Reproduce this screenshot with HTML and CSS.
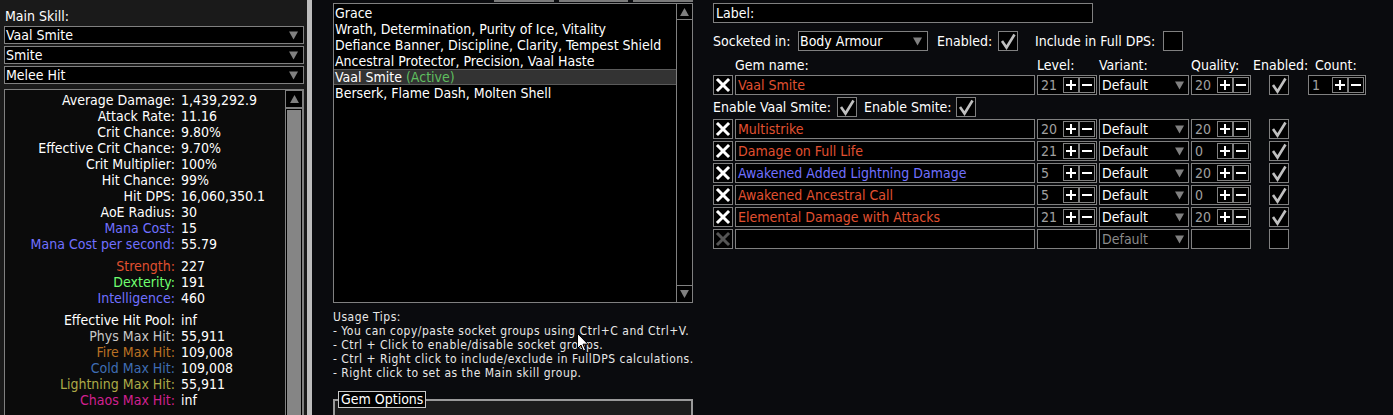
FILE: index.html
```html
<!DOCTYPE html>
<html>
<head>
<meta charset="utf-8">
<link rel="stylesheet" href="styles.css">
</head>
<body>
<svg class="defs" width="0" height="0" aria-hidden="true">
  <symbol id="i-down" viewBox="0 0 10 9"><path d="M0 0 H10 L5 9 Z"/></symbol>
  <symbol id="i-up" viewBox="0 0 10 9"><path d="M0 9 H10 L5 0 Z"/></symbol>
  <symbol id="i-x" viewBox="0 0 18 18"><path d="M4 4 L14 14 M14 4 L4 14" stroke-width="3" stroke-linecap="square"/></symbol>
  <symbol id="i-plus" viewBox="0 0 14 14"><path d="M2 6 H12 V8 H2 Z M6 2 H8 V12 H6 Z"/></symbol>
  <symbol id="i-minus" viewBox="0 0 14 14"><path d="M2 6 H12 V8 H2 Z"/></symbol>
  <symbol id="i-check" viewBox="0 0 18 18"><path d="M3 9 L7.5 15.5 L15.5 2.5" fill="none" stroke-width="2.6"/></symbol>
</svg>
<div class="app">
  <div class="left">
    <div class="lbl">Main Skill:</div>
    <div class="dd"><span>Vaal Smite</span><svg class="arr"><use href="#i-down"/></svg></div>
    <div class="dd"><span>Smite</span><svg class="arr"><use href="#i-down"/></svg></div>
    <div class="dd"><span>Melee Hit</span><svg class="arr"><use href="#i-down"/></svg></div>
    <div class="statbox">
      <div class="stats">
        <span class="k">Average Damage:</span><span>1,439,292.9</span>
        <span class="k">Attack Rate:</span><span>11.16</span>
        <span class="k">Crit Chance:</span><span>9.80%</span>
        <span class="k">Effective Crit Chance:</span><span>9.70%</span>
        <span class="k">Crit Multiplier:</span><span>100%</span>
        <span class="k">Hit Chance:</span><span>99%</span>
        <span class="k">Hit DPS:</span><span>16,060,350.1</span>
        <span class="k">AoE Radius:</span><span>30</span>
        <span class="k mana">Mana Cost:</span><span>15</span>
        <span class="k mana">Mana Cost per second:</span><span>55.79</span>
        <div class="sp"></div>
        <span class="k str">Strength:</span><span>227</span>
        <span class="k dex">Dexterity:</span><span>191</span>
        <span class="k int">Intelligence:</span><span>460</span>
        <div class="sp"></div>
        <span class="k">Effective Hit Pool:</span><span>inf</span>
        <span class="k phys">Phys Max Hit:</span><span>55,911</span>
        <span class="k fire">Fire Max Hit:</span><span>109,008</span>
        <span class="k cold">Cold Max Hit:</span><span>109,008</span>
        <span class="k light">Lightning Max Hit:</span><span>55,911</span>
        <span class="k chaos">Chaos Max Hit:</span><span>inf</span>
      </div>
      <div class="vscroll">
        <div class="sbtn"><svg class="sarr"><use href="#i-up"/></svg></div>
        <div class="track"><div class="thumb"></div></div>
      </div>
    </div>
  </div>
  <div class="divider"></div>
  <div class="middle">
    <div class="stubs"><div class="stub w60"></div><div class="stub w69"></div><div class="stub w60"></div></div>
    <div class="listbox">
      <div class="items">
        <div class="item">Grace</div>
        <div class="item">Wrath, Determination, Purity of Ice, Vitality</div>
        <div class="item">Defiance Banner, Discipline, Clarity, Tempest Shield</div>
        <div class="item">Ancestral Protector, Precision, Vaal Haste</div>
        <div class="item sel">Vaal Smite <span class="active">(Active)</span></div>
        <div class="item">Berserk, Flame Dash, Molten Shell</div>
      </div>
      <div class="lscroll">
        <div class="lbtn top"><svg class="sarr"><use href="#i-up"/></svg></div>
        <div class="lbtn bottom"><svg class="sarr"><use href="#i-down"/></svg></div>
      </div>
    </div>
    <div class="tips">
      <div>Usage Tips:</div>
      <div>- You can copy/paste socket groups using Ctrl+C and Ctrl+V.</div>
      <div>- Ctrl + Click to enable/disable socket groups.</div>
      <div>- Ctrl + Right click to include/exclude in FullDPS calculations.</div>
      <div>- Right click to set as the Main skill group.</div>
    </div>
    <div class="group">
      <div class="legend">Gem Options</div>
    </div>
  </div>
  <div class="right">
    <div class="labelbox">Label:</div>
    <div class="row2">
      <span class="t-sock">Socketed in:</span>
      <div class="dd dd-slot"><span>Body Armour</span><svg class="arr"><use href="#i-down"/></svg></div>
      <span class="t-en">Enabled:</span>
      <div class="cb"><svg class="chk"><use href="#i-check"/></svg></div>
      <span class="t-full">Include in Full DPS:</span>
      <div class="cb"></div>
    </div>
    <div class="gems">
      <div></div><div class="h h-name">Gem name:</div><div class="h">Level:</div><div class="h">Variant:</div><div class="h">Quality:</div><div class="h">Enabled:</div><div class="h h-count">Count:</div>

      <div class="xb"><svg class="xi"><use href="#i-x"/></svg></div>
      <div class="field str">Vaal Smite</div>
      <div class="num"><span>21</span><div class="pm"><svg><use href="#i-plus"/></svg></div><div class="pm"><svg><use href="#i-minus"/></svg></div></div>
      <div class="dd dd-var"><span>Default</span><svg class="arr"><use href="#i-down"/></svg></div>
      <div class="num"><span>20</span><div class="pm"><svg><use href="#i-plus"/></svg></div><div class="pm"><svg><use href="#i-minus"/></svg></div></div>
      <div class="encell"><div class="cb"><svg class="chk"><use href="#i-check"/></svg></div></div>
      <div class="num"><span>1</span><div class="pm"><svg><use href="#i-plus"/></svg></div><div class="pm"><svg><use href="#i-minus"/></svg></div></div>

      <div class="vaalrow">
        <span class="t-vaal">Enable Vaal Smite:</span>
        <div class="cb"><svg class="chk"><use href="#i-check"/></svg></div>
        <span class="t-smite">Enable Smite:</span>
        <div class="cb"><svg class="chk"><use href="#i-check"/></svg></div>
      </div>

      <div class="xb"><svg class="xi"><use href="#i-x"/></svg></div>
      <div class="field str">Multistrike</div>
      <div class="num"><span>20</span><div class="pm"><svg><use href="#i-plus"/></svg></div><div class="pm"><svg><use href="#i-minus"/></svg></div></div>
      <div class="dd dd-var"><span>Default</span><svg class="arr"><use href="#i-down"/></svg></div>
      <div class="num"><span>20</span><div class="pm"><svg><use href="#i-plus"/></svg></div><div class="pm"><svg><use href="#i-minus"/></svg></div></div>
      <div class="encell"><div class="cb"><svg class="chk"><use href="#i-check"/></svg></div></div>
      <div></div>

      <div class="xb"><svg class="xi"><use href="#i-x"/></svg></div>
      <div class="field str">Damage on Full Life</div>
      <div class="num"><span>21</span><div class="pm"><svg><use href="#i-plus"/></svg></div><div class="pm"><svg><use href="#i-minus"/></svg></div></div>
      <div class="dd dd-var"><span>Default</span><svg class="arr"><use href="#i-down"/></svg></div>
      <div class="num"><span>0</span><div class="pm"><svg><use href="#i-plus"/></svg></div><div class="pm"><svg><use href="#i-minus"/></svg></div></div>
      <div class="encell"><div class="cb"><svg class="chk"><use href="#i-check"/></svg></div></div>
      <div></div>

      <div class="xb"><svg class="xi"><use href="#i-x"/></svg></div>
      <div class="field int">Awakened Added Lightning Damage</div>
      <div class="num"><span>5</span><div class="pm"><svg><use href="#i-plus"/></svg></div><div class="pm"><svg><use href="#i-minus"/></svg></div></div>
      <div class="dd dd-var"><span>Default</span><svg class="arr"><use href="#i-down"/></svg></div>
      <div class="num"><span>20</span><div class="pm"><svg><use href="#i-plus"/></svg></div><div class="pm"><svg><use href="#i-minus"/></svg></div></div>
      <div class="encell"><div class="cb"><svg class="chk"><use href="#i-check"/></svg></div></div>
      <div></div>

      <div class="xb"><svg class="xi"><use href="#i-x"/></svg></div>
      <div class="field str">Awakened Ancestral Call</div>
      <div class="num"><span>5</span><div class="pm"><svg><use href="#i-plus"/></svg></div><div class="pm"><svg><use href="#i-minus"/></svg></div></div>
      <div class="dd dd-var"><span>Default</span><svg class="arr"><use href="#i-down"/></svg></div>
      <div class="num"><span>0</span><div class="pm"><svg><use href="#i-plus"/></svg></div><div class="pm"><svg><use href="#i-minus"/></svg></div></div>
      <div class="encell"><div class="cb"><svg class="chk"><use href="#i-check"/></svg></div></div>
      <div></div>

      <div class="xb"><svg class="xi"><use href="#i-x"/></svg></div>
      <div class="field str">Elemental Damage with Attacks</div>
      <div class="num"><span>21</span><div class="pm"><svg><use href="#i-plus"/></svg></div><div class="pm"><svg><use href="#i-minus"/></svg></div></div>
      <div class="dd dd-var"><span>Default</span><svg class="arr"><use href="#i-down"/></svg></div>
      <div class="num"><span>20</span><div class="pm"><svg><use href="#i-plus"/></svg></div><div class="pm"><svg><use href="#i-minus"/></svg></div></div>
      <div class="encell"><div class="cb"><svg class="chk"><use href="#i-check"/></svg></div></div>
      <div></div>

      <div class="xb off"><svg class="xi"><use href="#i-x"/></svg></div>
      <div class="field"></div>
      <div class="num"></div>
      <div class="dd dd-var off"><span>Default</span><svg class="arr"><use href="#i-down"/></svg></div>
      <div class="num"></div>
      <div class="encell"><div class="cb"></div></div>
      <div></div>
    </div>
  </div>
</div>
<svg class="cursor" viewBox="0 0 12 19"><path d="M0.5 0.5 V15.5 L4 12 L6.5 18 L8.5 17 L6 11.2 H11 Z"/></svg>
</body>
</html>
```
FILE: styles.css
```css
* { box-sizing: border-box; }
html, body { margin: 0; padding: 0; }
body {
  position: relative;
  width: 1393px;
  height: 415px;
  overflow: hidden;
  background: #0a0b0e;
  color: #ffffff;
  font-family: "DejaVu Sans Condensed", "DejaVu Sans", sans-serif;
  font-stretch: condensed;
  font-size: 14px;
  line-height: 16px;
}
.defs { position: absolute; width: 0; height: 0; }
.app { display: flex; height: 415px; }

/* left panel */
.left { width: 307px; flex: none; background: #1a1a1a; padding: 8px 0 0 4px; }
.lbl { height: 16px; padding-left: 1px; }
.dd {
  display: flex; align-items: center; justify-content: space-between;
  height: 18px; width: 300px; margin-top: 2px;
  border: 1px solid #808080; background: #000;
  padding: 0 5px 0 1px; white-space: nowrap;
}
.left .dd:first-of-type { margin-top: 1px; }
.arr { width: 9px; height: 9px; fill: #808080; flex: none; }

.statbox {
  display: flex; margin-top: 5px; width: 300px; height: 327px;
  border: 1px solid #808080; border-bottom: 0; background: #0b0b0b;
}
.stats {
  flex: 1; padding-top: 2px;
  display: grid; grid-template-columns: 170px auto; column-gap: 6px;
  align-content: start; white-space: nowrap;
}
.stats .k { text-align: right; }
.sp { grid-column: 1 / -1; height: 6px; }
.mana, .int { color: #7070ff; }
.str { color: #e05030; }
.dex { color: #70ff70; }
.phys { color: #c8c8c8; }
.fire { color: #b97123; }
.cold { color: #3f6db3; }
.light { color: #adaa47; }
.chaos { color: #d02090; }

.vscroll { width: 18px; flex: none; display: flex; flex-direction: column; }
.sbtn {
  height: 18px; border: 1px solid #808080; background: #000;
  display: flex; align-items: center; justify-content: center;
}
.sarr { width: 9px; height: 8px; fill: #808080; }
.track { flex: 1; border: 1px solid #808080; border-bottom: 0; background: #000; padding: 1px 1px 0; }
.thumb { height: 100%; background: #858585; }

.divider { width: 5px; flex: none; background: #bdbdbd; }

/* middle */
.middle { width: 360px; flex: none; margin-left: 21px; }
.stubs { display: flex; justify-content: flex-end; gap: 5px; height: 2px; }
.stub { height: 2px; background: #7a7a7a; }
.w60 { width: 60px; }
.w69 { width: 69px; }
.listbox {
  display: flex; margin-top: 1px; height: 300px;
  border: 1px solid #808080; background: #000;
}
.items { flex: 1; padding-top: 1px; }
.item { height: 16px; padding-left: 1px; white-space: nowrap; }
.sel { background: #333333; box-shadow: inset 0 1px #5a5a5a, inset 0 -1px #5a5a5a; }
.active { color: #5fbf5f; }
.lscroll {
  width: 16px; flex: none; border-left: 1px solid #808080;
  display: flex; flex-direction: column; justify-content: space-between;
}
.lbtn { height: 16px; display: flex; align-items: center; justify-content: center; }
.lbtn.top { border-bottom: 1px solid #808080; }
.lbtn.bottom { border-top: 1px solid #808080; height: 17px; }

.tips { margin-top: 7px; font-size: 12px; line-height: 14px; color: #e8e8e8; letter-spacing: 0.5px; white-space: nowrap; }
.group {
  position: relative; margin-top: 19px; height: 16px;
  border: 2px solid #9a9a9a; border-bottom: 0; background: #1c1c1c;
}
.legend {
  position: absolute; left: 3px; top: -10px; height: 17px;
  border: 1px solid #c8c8c8; background: #000; padding: 0 2px; line-height: 15px;
}

/* right */
.right { flex: 1; margin-left: 20px; }
.labelbox {
  margin-top: 3px; width: 380px; height: 20px;
  border: 1px solid #808080; background: #000;
  padding-left: 2px; line-height: 18px;
}
.row2 { display: flex; align-items: center; margin-top: 8px; height: 20px; white-space: nowrap; }
.t-sock { width: 85px; }
.dd-slot { width: 130px; height: 20px; margin: 0; }
.t-en { width: 61px; margin-left: 9px; }
.t-full { width: 128px; margin-left: 17px; }
.cb {
  width: 20px; height: 20px; flex: none;
  border: 1px solid #808080; background: #000;
  display: flex; align-items: center; justify-content: center;
}
.chk { width: 18px; height: 18px; stroke: #c0c0c0; fill: none; }

.gems {
  margin-top: 6px;
  display: grid;
  grid-template-columns: 20px 300px 60px 90px 60px 53px 58px;
  grid-template-rows: 16px;
  grid-auto-rows: 20px;
  gap: 2px;
  white-space: nowrap;
}
.h-count { padding-left: 7px; }
.xb {
  border: 1px solid #808080; background: #000;
  display: flex; align-items: center; justify-content: center;
}
.xi { width: 18px; height: 18px; stroke: #ffffff; }
.xb.off .xi { stroke: #555555; }
.field { border: 1px solid #808080; background: #000; padding-left: 2px; line-height: 18px; }
.num {
  display: flex; align-items: center;
  border: 1px solid #808080; background: #000;
  padding: 0 1px 0 3px; color: #a0a0a0;
}
.num span { margin-right: auto; }
.pm {
  width: 16px; height: 16px; border: 1px solid #808080;
  display: flex; align-items: center; justify-content: center;
}
.pm svg { width: 14px; height: 14px; fill: #ffffff; }
.dd-var { width: 90px; height: 20px; margin: 0; padding-right: 4px; padding-left: 2px; }
.dd-var.off span { color: #8a8a8a; }
.encell { padding-left: 16px; }
.vaalrow { grid-column: 1 / -1; display: flex; align-items: center; }
.t-vaal { width: 124px; }
.t-smite { width: 92px; margin-left: 7px; }

.cursor {
  position: absolute; left: 577px; top: 333px; width: 12px; height: 19px;
}
.cursor path { fill: #ffffff; stroke: #000; stroke-width: 1; }
```
